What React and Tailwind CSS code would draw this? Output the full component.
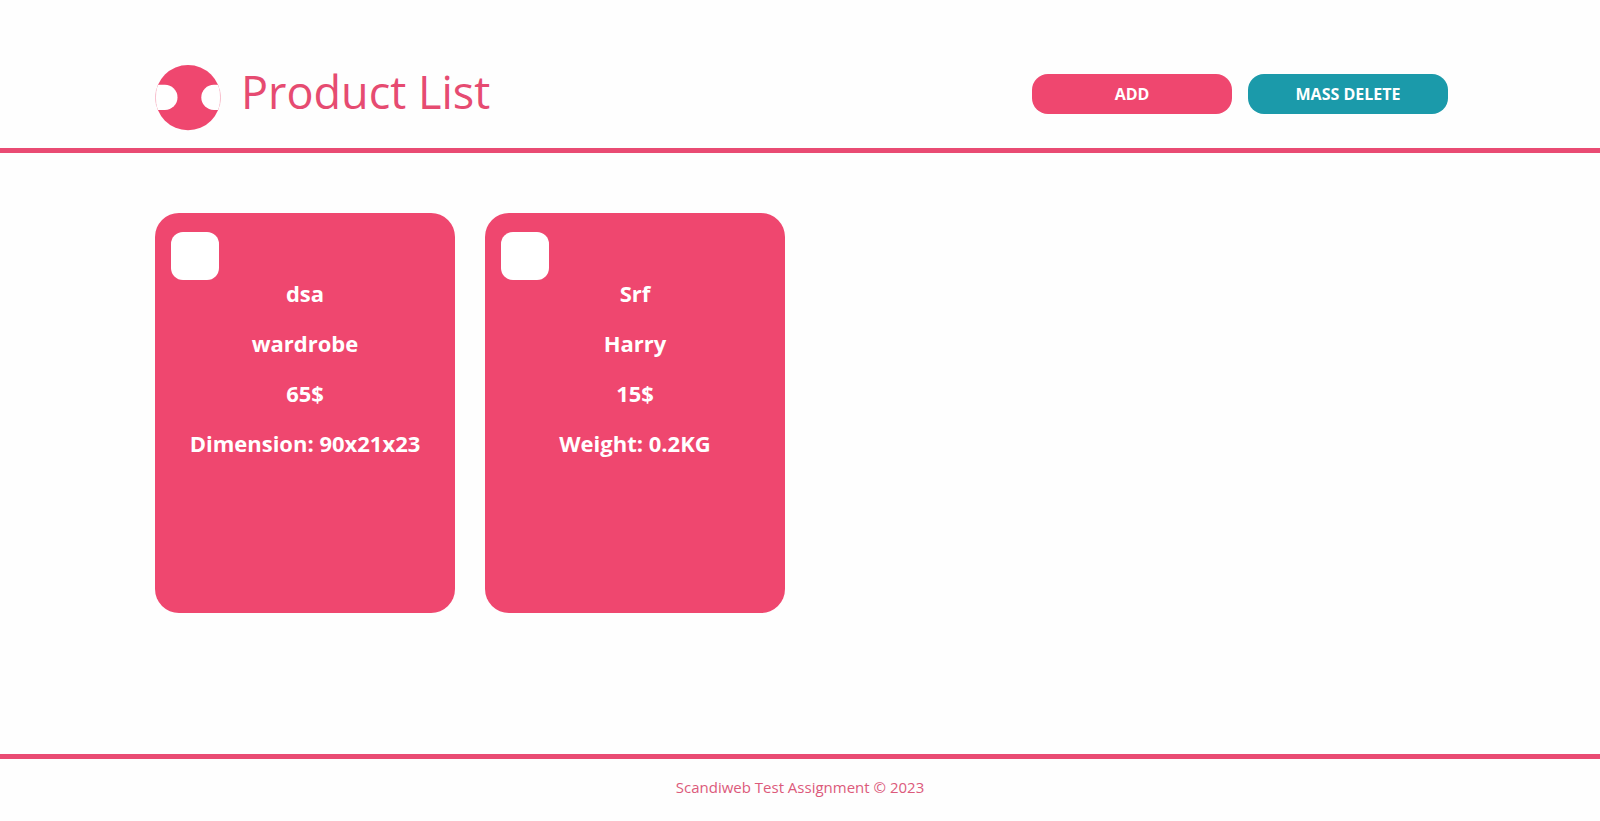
const products = [
  { id: 1, sku: "dsa", name: "wardrobe", price: "65$", detail: "Dimension: 90x21x23" },
  { id: 2, sku: "Srf", name: "Harry", price: "15$", detail: "Weight: 0.2KG" },
];

function Logo() {
  return (
    <svg className="size-[66px] shrink-0" viewBox="0 0 66 66" aria-hidden="true">
      <defs>
        <clipPath id="disc">
          <circle cx="33" cy="32.6" r="32.6" />
        </clipPath>
      </defs>
      <circle cx="33" cy="32.6" r="32.6" fill="#ef476f" />
      <g clipPath="url(#disc)" fill="#fff">
        <rect x="-14" y="19.8" width="36.5" height="25.2" rx="12.6" />
        <rect x="46.3" y="19.8" width="36" height="25.2" rx="12.6" />
      </g>
      <path d="M1.3 25.1A32.6 32.6 0 0 0 1.3 40.1M64.7 25.1A32.6 32.6 0 0 1 64.7 40.1" fill="none" stroke="#f3a9bb" strokeWidth="0.4" />
    </svg>
  );
}

function ProductCard({ product }) {
  return (
    <li className="h-[400px] w-[300px] rounded-3xl bg-[#ef476f] px-4 pt-[19px] text-white">
      <input
        type="checkbox"
        aria-label={`Select ${product.name}`}
        className="block size-12 appearance-none rounded-xl bg-white checked:bg-[#1b9aaa]"
      />
      <div className="flex flex-col gap-6 text-center text-[22px] leading-[26px] font-bold whitespace-nowrap">
        <p>{product.sku}</p>
        <p>{product.name}</p>
        <p>{product.price}</p>
        <p>{product.detail}</p>
      </div>
    </li>
  );
}

export default function App() {
  return (
    <div className="flex min-h-screen flex-col bg-[#fefefe] font-['Open_Sans','Noto_Sans',sans-serif] text-[#e64b71]">
      <header className="flex h-[153px] items-start justify-between border-b-[5px] border-[#e94b73] pr-[152px] pl-[155px]">
        <div className="flex items-center gap-5 pt-[65px]">
          <Logo />
          <h1 className="pb-3 text-[45px] leading-[54px]">Product List</h1>
        </div>
        <div className="flex gap-4 pt-[74px] font-bold text-white">
          <button type="button" className="h-10 w-[200px] rounded-2xl bg-[#ef476f] text-base">
            ADD
          </button>
          <button type="button" className="h-10 w-[200px] rounded-2xl bg-[#1b9aaa] text-base">
            MASS DELETE
          </button>
        </div>
      </header>
      <main className="grow px-[155px] py-[60px]">
        <ul className="flex flex-wrap gap-[30px]">
          {products.map((product) => (
            <ProductCard key={product.id} product={product} />
          ))}
        </ul>
      </main>
      <footer className="h-[67px] border-t-[5px] border-[#e94b73] pt-4 text-center text-[15px] leading-6 text-[#dc5a7b]">
        <p>Scandiweb Test Assignment © 2023</p>
      </footer>
    </div>
  );
}
